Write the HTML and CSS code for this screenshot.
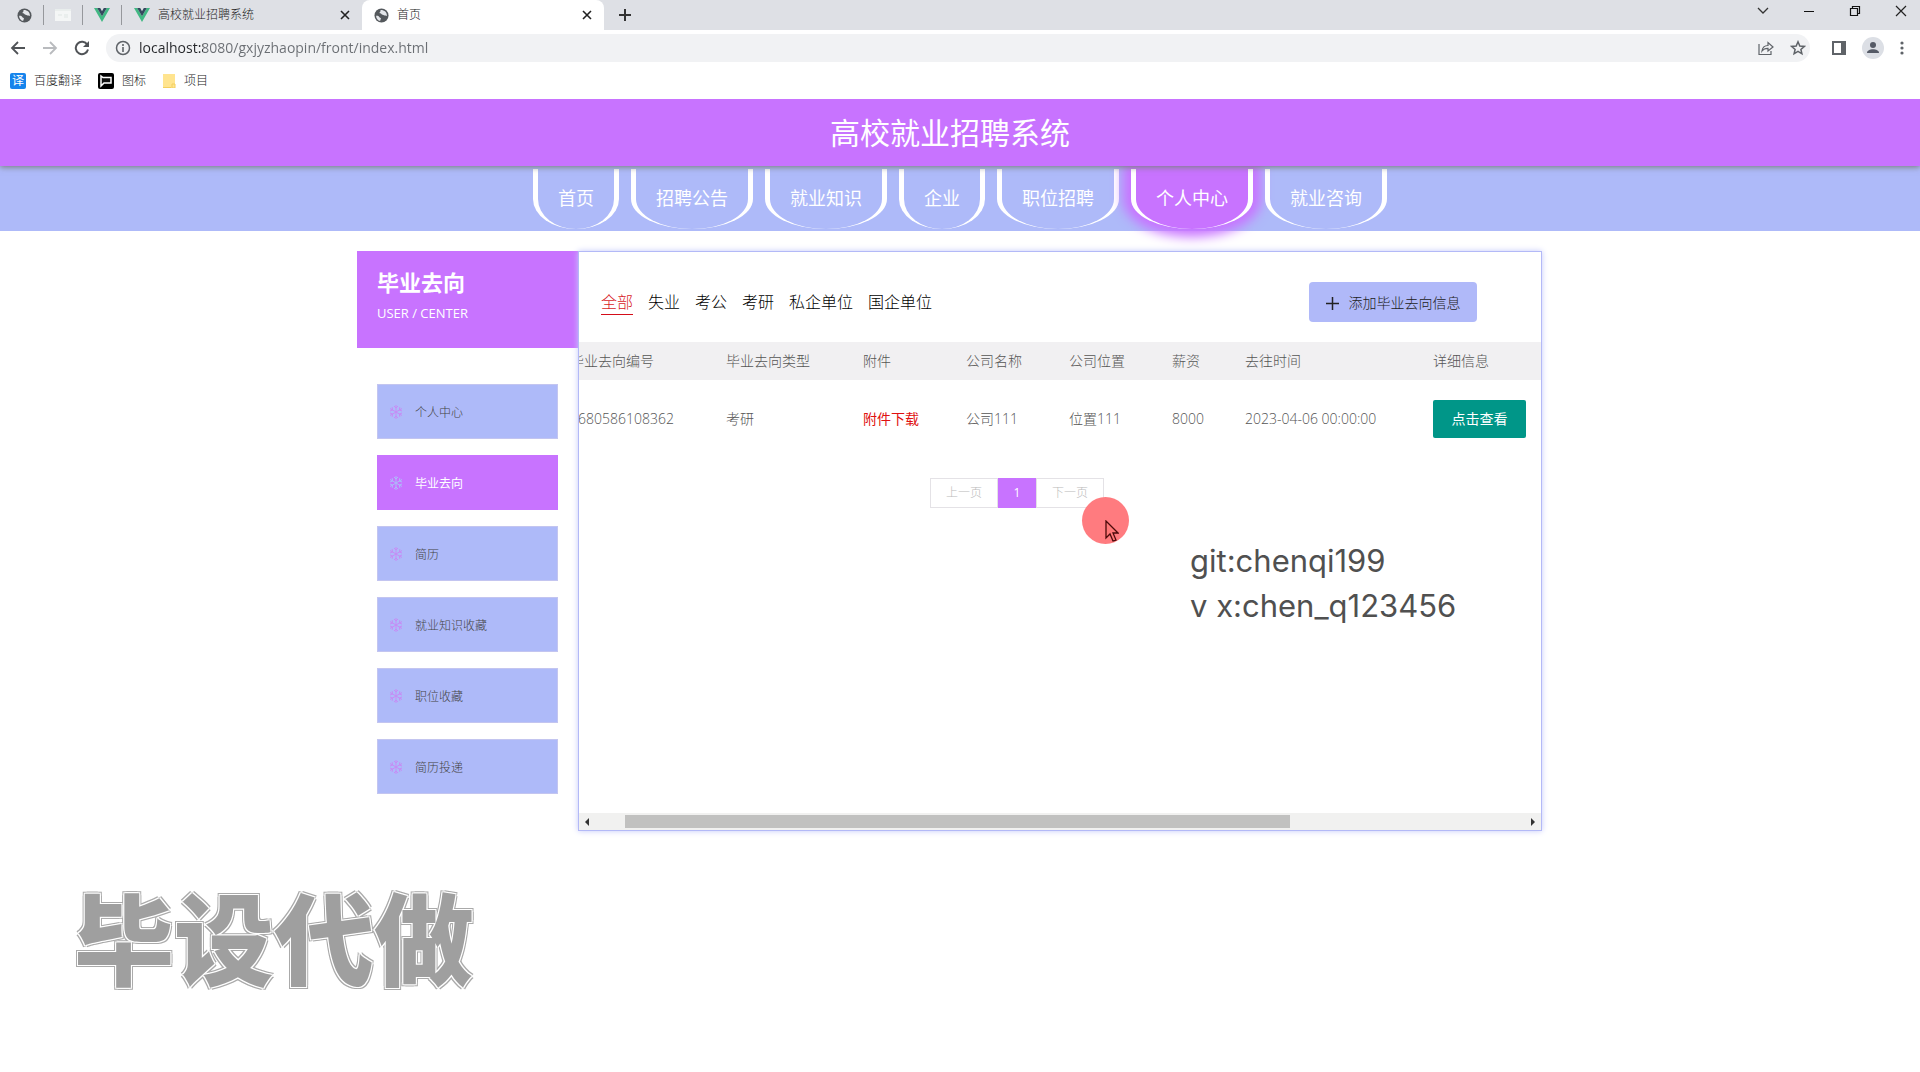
FILE: index.html
```html
<!DOCTYPE html>
<html lang="zh-CN">
<head>
<meta charset="utf-8">
<title>首页</title>
<link rel="stylesheet" href="styles.css">
</head>
<body>
<svg class="sprite" aria-hidden="true">
  <symbol id="globe" viewBox="0 0 16 16"><circle cx="8" cy="8" r="7.5" fill="#54585c"/><path d="M2.2 8.2c1.600-.2 3 .3 3.400 1.400.4.900 1.600.6 1.800 1.600.2.900-.9 1.300-.8 2.600C4.200 13.500 2.300 11 2.200 8.200zM7 2.100c-.2 1 .3 1.400-.6 2.100-.9.600-.6 1.300.3 1.400 1.200.1 1.200 1.600 2.600 1.700 1.200.1 1.500.9 2.800.8.700 0 1.200.3 1.700.3C14 4.500 11 2 7 2.100z" fill="#e4e6ea"/></symbol>
  <symbol id="vue" viewBox="0 0 16 14"><path d="M0 0h3.200L8 8.300 12.800 0H16L8 14z" fill="#41b883"/><path d="M3.200 0h3L8 3.200 9.800 0h3L8 8.300z" fill="#35495e"/></symbol>
  <symbol id="cross" viewBox="0 0 10 10"><path d="M1 1l8 8M9 1L1 9" stroke="currentColor" stroke-width="1.600" fill="none"/></symbol>
  <symbol id="snow" viewBox="0 0 14 14"><path d="M7 0v14M1 3.500l12 7M13 3.500l-12 7M5 1l2 2 2-2M5 13l2-2 2 2M1 6l2.600-1L3.200 2.200M13 6l-2.600-1 .4-2.800M1 8l2.600 1-.4 2.800M13 8l-2.600 1 .4 2.800" stroke="currentColor" fill="none"/></symbol>
</svg>

<div class="browser">
  <div class="tabs">
    <button class="pin" aria-label="标签页"><svg width="15" height="15"><use href="#globe"/></svg></button>
    <button class="pin" aria-label="标签页"><svg width="16" height="12" viewBox="0 0 16 12"><path d="M0 0h16v12H0z" fill="#f4f6f6"/><path d="M0 1h16M3 6h4M9 6h4M9 8h4" stroke="#dfe6e4"/></svg></button>
    <button class="pin" aria-label="标签页"><svg width="16" height="14"><use href="#vue"/></svg></button>
    <div class="tab tab-wide"><svg width="16" height="14"><use href="#vue"/></svg><span>高校就业招聘系统</span><button aria-label="关闭"><svg width="10" height="10"><use href="#cross"/></svg></button></div>
    <div class="tab tab-active"><svg width="15" height="15"><use href="#globe"/></svg><span>首页</span><button aria-label="关闭"><svg width="10" height="10"><use href="#cross"/></svg></button></div>
    <button class="new-tab" aria-label="新标签页"><svg width="12" height="12" viewBox="0 0 12 12"><path d="M6 0v12M0 6h12" stroke="#333" stroke-width="2"/></svg></button>
    <div class="window-buttons">
      <button aria-label="搜索标签页"><svg width="12" height="12" viewBox="0 0 12 12"><path d="M1 3l5 5 5-5" fill="none" stroke="#333" stroke-width="1.300"/></svg></button>
      <button aria-label="最小化"><svg width="12" height="12" viewBox="0 0 12 12"><path d="M1 6.500h10" stroke="#111"/></svg></button>
      <button aria-label="还原"><svg width="12" height="12" viewBox="0 0 12 12"><path d="M1.500 3.500h7v7h-7zM3.500 3V1.500h7v7H9" fill="none" stroke="#111" stroke-width="1.200"/></svg></button>
      <button aria-label="关闭窗口"><svg width="12" height="12" viewBox="0 0 12 12"><path d="M1 1l10 10M11 1L1 11" stroke="#222" stroke-width="1.200"/></svg></button>
    </div>
  </div>
  <div class="toolbar">
    <button aria-label="后退"><svg width="16" height="16" viewBox="0 0 16 16"><path d="M15 8H2M8 2L2 8l6 6" fill="none" stroke="#505357" stroke-width="1.800"/></svg></button>
    <button aria-label="前进"><svg width="16" height="16" viewBox="0 0 16 16"><path d="M1 8h13M8 2l6 6-6 6" fill="none" stroke="#b9bbbe" stroke-width="1.800"/></svg></button>
    <button aria-label="刷新"><svg width="16" height="16" viewBox="0 0 16 16"><path d="M13.300 4.800A6.200 6.200 0 1 0 14 9.500" fill="none" stroke="#505357" stroke-width="2"/><path d="M15 1v6H9z" fill="#505357"/></svg></button>
    <div class="address">
      <svg width="16" height="16" viewBox="0 0 16 16"><circle cx="8" cy="8" r="6.500" fill="none" stroke="#5f6368" stroke-width="1.500"/><path d="M8 7v5M8 4v2" stroke="#5f6368" stroke-width="1.600"/></svg>
      <input class="url" type="text" aria-label="地址" value="localhost:8080/gxjyzhaopin/front/index.html">
      <button aria-label="分享"><svg width="16" height="16" viewBox="0 0 16 16"><path d="M1 4v10.500h12V11M4 11c.5-4 3-5.500 6-5.500V2.500L15 7l-5 4V8.300C7.500 8.200 5.500 9 4 11z" fill="none" stroke="#5f6368" stroke-width="1.200"/></svg></button>
      <button aria-label="收藏"><svg width="16" height="16" viewBox="0 0 16 16"><path d="M8 1.800l1.800 4.200 4.500.4-3.400 3 1 4.400L8 11.400l-3.900 2.400 1-4.400-3.400-3 4.500-.4z" fill="none" stroke="#5f6368" stroke-width="1.500"/></svg></button>
    </div>
    <button aria-label="侧边栏"><svg width="14" height="14" viewBox="0 0 14 14"><path d="M1 1h12v12H1z" fill="none" stroke="#5f6368" stroke-width="2"/><path d="M9 1h5v12H9z" fill="#5f6368"/></svg></button>
    <button aria-label="用户"><svg width="22" height="22" viewBox="0 0 22 22"><circle cx="11" cy="11" r="11" fill="#dcdfe5"/><circle cx="11" cy="8" r="3" fill="#555a66"/><path d="M5 16c0-5 12-5 12 0z" fill="#555a66"/></svg></button>
    <button aria-label="菜单"><svg width="4" height="14" viewBox="0 0 4 14" fill="#5f6368"><circle cx="2" cy="2" r="1.600"/><circle cx="2" cy="7" r="1.600"/><circle cx="2" cy="12" r="1.600"/></svg></button>
  </div>
  <div class="bookmarks">
    <a href="#"><b class="translate">译</b>百度翻译</a>
    <a href="#"><svg width="16" height="16" viewBox="0 0 16 16"><rect width="16" height="16" rx="2" fill="#000"/><path d="M3 13V3l2 1.500h8V10H6z" fill="#111" stroke="#fff" stroke-width="1.500"/></svg>图标</a>
    <a href="#"><svg width="14" height="14" viewBox="0 0 14 14"><path d="M1 0h12v14H1z" fill="#ffe48f"/><path d="M1 13.500h8M10 10v4h3v-4z" stroke="#f3cf5e" fill="#ffe48f"/></svg>项目</a>
  </div>
</div>

<header class="banner"><h1>高校就业招聘系统</h1></header>
<nav class="nav">
  <a href="#">首页</a>
  <a href="#">招聘公告</a>
  <a href="#">就业知识</a>
  <a href="#">企业</a>
  <a href="#">职位招聘</a>
  <a href="#" class="current">个人中心</a>
  <a href="#">就业咨询</a>
</nav>

<main class="center">
  <aside class="side">
    <div class="side-head"><h2>毕业去向</h2><p>USER / CENTER</p></div>
    <nav class="menu">
      <a href="#"><svg width="14" height="14"><use href="#snow"/></svg><span>个人中心</span></a>
      <a href="#" class="current"><svg width="14" height="14"><use href="#snow"/></svg><span>毕业去向</span></a>
      <a href="#"><svg width="14" height="14"><use href="#snow"/></svg><span>简历</span></a>
      <a href="#"><svg width="14" height="14"><use href="#snow"/></svg><span>就业知识收藏</span></a>
      <a href="#"><svg width="14" height="14"><use href="#snow"/></svg><span>职位收藏</span></a>
      <a href="#"><svg width="14" height="14"><use href="#snow"/></svg><span>简历投递</span></a>
    </nav>
  </aside>

  <section class="panel">
    <div class="filters">
      <a href="#" class="current">全部</a>
      <a href="#">失业</a>
      <a href="#">考公</a>
      <a href="#">考研</a>
      <a href="#">私企单位</a>
      <a href="#">国企单位</a>
      <button class="add"><svg width="13" height="13" viewBox="0 0 13 13"><path d="M6.500 0v13M0 6.500h13" stroke="currentColor" stroke-width="1.500"/></svg>添加毕业去向信息</button>
    </div>
    <table class="records">
      <colgroup><col class="c-id"><col class="c-type"><col class="c-text"><col class="c-text"><col class="c-text"><col class="c-pay"><col class="c-time"><col></colgroup>
      <thead><tr><th>毕业去向编号</th><th>毕业去向类型</th><th>附件</th><th>公司名称</th><th>公司位置</th><th>薪资</th><th>去往时间</th><th>详细信息</th></tr></thead>
      <tbody><tr><td class="num">1680586108362</td><td>考研</td><td><a href="#">附件下载</a></td><td>公司111</td><td>位置111</td><td class="num">8000</td><td class="num">2023-04-06 00:00:00</td><td><button class="view">点击查看</button></td></tr></tbody>
    </table>
    <div class="pager">
      <button disabled>上一页</button><button class="current">1</button><button disabled>下一页</button>
    </div>
    <div class="scrollbar">
      <svg width="4" height="8" viewBox="0 0 4 8"><path d="M4 0v8L0 4z" fill="#333"/></svg>
      <div class="track"><div class="thumb"></div></div>
      <svg width="4" height="8" viewBox="0 0 4 8"><path d="M0 0v8l4-4z" fill="#333"/></svg>
    </div>
  </section>
</main>

<div class="pointer"><svg width="14" height="22" viewBox="0 0 14 22"><path d="M1 1v17l4-4 3 7 3-1-3-7h5z" fill="#f77" stroke="#4c0a0a" stroke-width="1.300"/></svg></div>
<p class="contact">git:chenqi199<br>v x:chen_q123456</p>
<p class="watermark">毕设代做</p>
</body>
</html>
```
FILE: styles.css
```css
* { box-sizing: border-box; }
body {
  position: relative;
  margin: 0;
  min-height: 100vh;
  overflow-x: hidden;
  background: #fff;
  color: #555;
  font: 300 14px/20px "Open Sans", "Noto Sans CJK SC", sans-serif;
}
h1, h2, p { margin: 0; }
a { color: inherit; text-decoration: none; }
button { padding: 0; border: 0; background: none; color: inherit; font: inherit; }
svg { display: block; flex: none; }
.sprite { position: absolute; width: 0; height: 0; }

/* browser window */
.browser { color: #222; font-size: 12px; }
.tabs { display: flex; align-items: center; height: 30px; padding-left: 5px; background: #dee0e5; }
.pin { display: flex; align-items: center; justify-content: center; width: 39px; height: 20px; border-right: 1px solid #96989c; }
.tab { display: flex; align-items: center; gap: 8px; height: 30px; padding: 0 12px; }
.tab span { flex: 1; }
.tab-wide { width: 240px; }
.tab-active { width: 242px; border-radius: 8px 8px 0 0; background: #fff; }
.new-tab { margin-left: 15px; }
.window-buttons { display: flex; gap: 34px; margin: 0 13px 8px auto; }
.toolbar { display: flex; align-items: center; gap: 16px; height: 36px; padding: 0 16px 0 10px; }
.address { display: flex; flex: 1; align-items: center; gap: 8px; height: 28px; margin-right: 6px; padding: 0 10px 0 9px; border-radius: 14px; background: #f1f2f4; }
.address { padding-right: 4px; }
.address button { margin-left: 8px; }
.url {
  flex: 1;
  min-width: 0;
  padding: 0;
  border: 0;
  background: linear-gradient(90deg, #25272a 64px, #6a6e73 64px) text;
  color: transparent;
  font: 14px/20px "Open Sans", sans-serif;
}
.bookmarks { display: flex; align-items: center; gap: 16px; height: 33px; padding: 0 10px 3px; }
.bookmarks a { display: flex; align-items: center; gap: 8px; }
.translate { width: 16px; height: 16px; border-radius: 2px; background: #1684ec; color: #fff; font-size: 12px; font-weight: 400; line-height: 16px; text-align: center; }

/* site heading */
.banner { position: relative; z-index: 1; height: 67px; padding-right: 20px; background: #c873ff; box-shadow: 0 1px 6px #777; clip-path: inset(0 0 -10px); color: #fff; text-align: center; }
.banner h1 { font-size: 30px; font-weight: 400; line-height: 67px; }
.nav { display: flex; justify-content: center; gap: 12px; height: 65px; padding: 3px 0 2px; background: #aebaf9; color: #fff; font-size: 18px; font-weight: 400; line-height: 58px; }
.nav a { padding: 0 20px; border: solid #fff; border-width: 0 5px; border-radius: 0 0 50% 50%; }
.nav .current { background: #c873ff; box-shadow: 0 0 12px 8px #c873ff; }

/* user center */
.center { display: flex; width: 1185px; max-width: 100%; margin: 20px 0 20px max(0px, calc(50% - 603px)); }
.side, .panel { align-self: flex-start; }
.side { flex: none; width: 221px; }
.side-head { height: 97px; padding: 16px 20px; background: #c873ff; color: #fff; }
.side-head h2 { font-size: 22px; font-weight: 700; line-height: 30px; }
.side-head p { font-size: 13px; font-weight: 400; line-height: 32px; }
.menu { display: grid; gap: 16px; padding: 36px 20px; }
.menu a { display: flex; align-items: center; gap: 12px; height: 55px; padding: 0 11px; border: 1px solid #c3c5f0; background: #aebaf9; color: #444; font-size: 12px; }
.menu span { padding-top: 3px; }
.menu svg { color: #c68cf5; }
.menu .current { border-color: #c873ff; background: #c873ff; color: #fff; font-weight: 400; }
.menu .current svg { color: #aebaf9; }
.panel { display: flex; flex: 1; flex-direction: column; min-width: 0; min-height: 580px; overflow: hidden; border: 1px solid #b3b9f7; box-shadow: 0 0 6px #c5c9fa; }
.filters { display: flex; align-items: center; gap: 15px; height: 90px; padding: 10px 64px 0 22px; color: #000; font-size: 16px; line-height: 24px; }
.filters a { border-bottom: 1px solid transparent; }
.filters .current { border-color: #d40d19; color: #d81a1f; }
.add { display: flex; align-items: center; justify-content: center; gap: 10px; width: 168px; height: 40px; padding-top: 2px; margin-left: auto; border-radius: 4px; background: #b0b9f9; color: #222; font-size: 14px; }
.records { width: calc(100% + 24px); margin-left: -24px; border-collapse: collapse; table-layout: fixed; white-space: nowrap; }
.records th, .records td { padding: 0 15px; text-align: left; font-weight: inherit; }
.records th { height: 38px; background: #f1f0f2; }
.records td { height: 78px; }
.records td a { color: #e01010; font-weight: 400; }
.records .num { font-size: 14px; }
.c-id { width: 156px; }
.c-type { width: 137px; }
.c-text { width: 103px; }
.c-pay { width: 73px; }
.c-time { width: 188px; }
.view { width: 93px; height: 38px; border-radius: 2px; background: #009688; color: #fff; font-weight: 400; }
.pager { display: flex; justify-content: center; margin-top: 20px; padding-right: 86px; font-size: 12px; }
.pager button { width: 68px; height: 30px; border: 1px solid #e4e2e6; color: #bbb; }
.pager .current { width: 38px; border-color: #c873ff; background: #c873ff; color: #fff; font-weight: 400; }
.scrollbar { display: flex; align-items: center; height: 17px; margin-top: auto; padding: 0 6px; background: #f1f1f0; }
.track { flex: 1; padding: 0 20px 0 36px; }
.thumb { width: 75%; height: 13px; background: #c1c1c0; }

/* overlays */
.pointer { position: absolute; top: 497px; left: 1082px; display: flex; width: 47px; height: 47px; padding: 23px 0 0 23px; border-radius: 50%; background: #ff7b7f; }
.contact { position: absolute; top: 538px; left: 1190px; color: #505050; font: 31px/45px Inter, sans-serif; white-space: nowrap; }
.watermark {
  position: absolute;
  top: 875px;
  left: 74px;
  color: #9f9f9f;
  font: 900 100px/120px "Noto Sans CJK SC", sans-serif;
  white-space: nowrap;
  text-shadow: 1px 1px #fff, -1px -1px #fff, 1px -1px #fff, -1px 1px #fff, 2px 2px #aaa, -2px -2px #aaa, 2px -2px #aaa, -2px 2px #aaa;
}
```
